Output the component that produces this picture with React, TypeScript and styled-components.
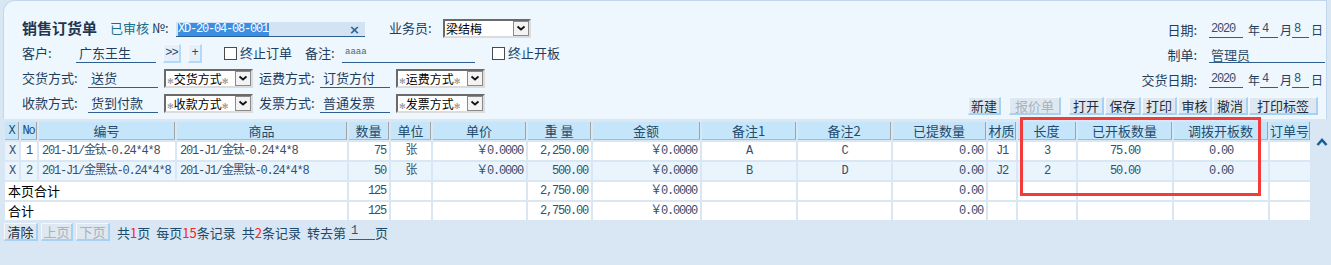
import styled, { createGlobalStyle, css } from "styled-components";

const GlobalStyle = createGlobalStyle`
  html, body {
    margin: 0;
    padding: 0;
    background: #d9e7f5;
  }
  body {
    font-family: "Noto Sans CJK SC", "Liberation Sans", sans-serif;
    font-size: 13px;
    color: #1f3d5c;
  }
`;

// SimSun-like narrow monospace for codes and numbers
const mono = css`
  font-family: "Liberation Mono", "Noto Sans CJK SC", monospace;
  font-size: 12px;
  letter-spacing: -1.2px;
`;

const Page = styled.div`
  position: relative;
  width: 1331px;
  height: 265px;
  overflow: hidden;
`;

const Panel = styled.div`
  display: flex;
  justify-content: space-between;
  box-sizing: border-box;
  width: 1324px;
  height: 119px;
  margin-left: 3px;
  background: #eef6fe;
  border: 1px solid #c3d7ec;
  border-bottom: none;
  border-top-left-radius: 12px;
`;

const LeftForm = styled.div`
  display: flex;
  flex-direction: column;
  gap: 3px;
  padding: 16px 0 0 18px;
`;

const Row = styled.div`
  display: flex;
  align-items: center;
  height: 22px;
  line-height: 20px;
  white-space: nowrap;
`;

const Title = styled.h1`
  flex: none;
  width: 88px;
  margin: 0;
  font-size: 15px;
  font-weight: 700;
  line-height: 20px;
  color: #1f3550;
`;

const Label = styled.span<{ $w?: number; $ml?: number; $color?: string }>`
  flex: none;
  width: ${({ $w }) => ($w ? `${$w}px` : "auto")};
  margin-left: ${({ $ml }) => $ml ?? 0}px;
  color: ${({ $color }) => $color ?? "#1f3d5c"};
`;

const Value = styled.span<{ $w: number; $mono?: boolean }>`
  flex: none;
  box-sizing: border-box;
  width: ${({ $w }) => $w}px;
  height: 20px;
  line-height: 19px;
  padding-left: 3px;
  border-bottom: 1px solid #2f5f90;
  color: #1f3d5c;
  ${({ $mono }) =>
    $mono &&
    css`
      font-family: "Liberation Mono", monospace;
      font-size: 9px;
      color: #4e6478;
    `}
`;

const NoField = styled.div`
  flex: none;
  align-self: flex-end;
  display: flex;
  align-items: center;
  box-sizing: border-box;
  width: 189px;
  height: 15px;
  margin-bottom: 2px;
  background: #d2e4f3;
  border-bottom: 1px solid #2f5f90;
`;

const Selected = styled.span`
  ${mono};
  margin-left: 2px;
  line-height: 13px;
  padding-right: 1px;
  background: #3b8fe3;
  color: #fff;
`;

const Clear = styled.span`
  margin-left: auto;
  margin-right: 5px;
  font: bold 13px "DejaVu Sans", sans-serif;
  line-height: 13px;
  color: #2f5f90;
`;

const SelectBox = styled.div<{ $w: number; $ml?: number }>`
  flex: none;
  display: flex;
  box-sizing: border-box;
  width: ${({ $w }) => $w}px;
  height: 19px;
  margin-left: ${({ $ml }) => $ml ?? 0}px;
  background: #fff;
  border: 2px solid;
  border-color: #6a6a6a #dcdcdc #dcdcdc #6a6a6a;
`;

const SelectText = styled.span`
  flex: 1;
  padding-left: 1px;
  font-size: 12px;
  line-height: 15px;
  white-space: nowrap;
  color: #000;
`;

const Star = styled.span`
  color: #8c8c8c;
  font: 8px "DejaVu Sans", sans-serif;
`;

const SelectArrow = styled.span`
  flex: none;
  display: flex;
  align-items: center;
  justify-content: center;
  box-sizing: border-box;
  width: 16px;
  border: 1px solid #8a8a8a;
  background: #f3f3f3;
`;

const SmallButton = styled.span<{ $w: number; $ml: number }>`
  flex: none;
  box-sizing: border-box;
  width: ${({ $w }) => $w}px;
  height: 19px;
  margin-left: ${({ $ml }) => $ml}px;
  ${mono};
  letter-spacing: -1px;
  line-height: 16px;
  text-align: center;
  color: #2a4a6a;
  background: #e6f0fa;
  border-style: solid;
  border-width: 1px 2px 2px 1px;
  border-color: #f6faff #b3d9f7 #b3d9f7 #f6faff;
`;

const Check = styled.label<{ $w?: number; $ml: number }>`
  flex: none;
  display: flex;
  align-items: center;
  width: ${({ $w }) => ($w ? `${$w}px` : "auto")};
  margin-left: ${({ $ml }) => $ml}px;
  color: #1f3d5c;
`;

const CheckBox = styled.span`
  box-sizing: border-box;
  width: 13px;
  height: 13px;
  margin-right: 3px;
  border: 1px solid #4a4a4a;
  background: #fff;
`;

const RightForm = styled.div`
  display: flex;
  flex-direction: column;
  align-items: flex-end;
  padding: 16px 1px 0 0;
`;

const DateGrid = styled.div`
  display: grid;
  grid-template-columns: auto 116px;
  grid-auto-rows: 25px;
  column-gap: 12px;
  align-items: center;
  white-space: nowrap;
`;

const GridLabel = styled.span`
  justify-self: end;
  color: #1f3d5c;
`;

const DateLine = styled.div`
  display: flex;
  align-items: center;
`;

const Blank = styled.span<{ $w: number; $mono?: boolean }>`
  flex: none;
  box-sizing: border-box;
  width: ${({ $w }) => $w}px;
  height: 16px;
  line-height: 15px;
  padding-left: 2px;
  border-bottom: 1px solid #2f5f90;
  color: #34506e;
  ${({ $mono }) => $mono && mono};
`;

const Unit = styled.span<{ $ml: number }>`
  flex: none;
  margin-left: ${({ $ml }) => $ml}px;
  font-size: 12px;
  line-height: 16px;
  color: #1f3d5c;
`;

const Toolbar = styled.div`
  display: flex;
  gap: 8px;
  margin: 5px 7px 0 0;
`;

const ToolGroup = styled.div`
  display: flex;
  gap: 1px;
`;

const ToolButton = styled.button<{ $w: number }>`
  flex: none;
  box-sizing: border-box;
  width: ${({ $w }) => $w}px;
  height: 18px;
  padding: 0;
  font-family: "Noto Sans CJK SC", sans-serif;
  font-size: 13px;
  line-height: 14px;
  color: #1c2e40;
  background: #dfe8f0;
  border-style: solid;
  border-width: 1px 2px 2px 1px;
  border-color: #f4f8fb #a6d1f3 #a6d1f3 #f4f8fb;
  &:disabled {
    color: #a7b2bd;
  }
`;

const TableArea = styled.div`
  display: flex;
  margin-top: 1px;
`;

const Table = styled.table`
  table-layout: fixed;
  width: 1309px;
  margin-left: 3px;
  border-collapse: separate;
  border-spacing: 2px;
`;

const Col = styled.col<{ $w: number }>`
  width: ${({ $w }) => $w}px;
`;

const Th = styled.th<{ $mono?: boolean }>`
  box-sizing: border-box;
  height: 18px;
  padding: 0;
  overflow: hidden;
  white-space: nowrap;
  font-size: 13px;
  font-weight: 400;
  line-height: 16px;
  text-align: center;
  color: #244a6c;
  background: #c5e6fa;
  border-right: 1px solid #9fa4a8;
  border-bottom: 1px solid #b2b7bc;
  ${({ $mono }) => $mono && mono};
`;

type Align = "left" | "center" | "right";

const Td = styled.td<{ $align: Align; $bg: string }>`
  box-sizing: border-box;
  height: 18px;
  padding: 0 3px;
  overflow: hidden;
  white-space: nowrap;
  ${mono};
  line-height: 18px;
  text-align: ${({ $align }) => $align};
  color: #34506e;
  background: ${({ $bg }) => $bg};
`;

const SumCell = styled.td`
  box-sizing: border-box;
  height: 18px;
  padding: 0 3px;
  font-size: 13px;
  line-height: 18px;
  color: #000;
  background: #fff;
`;

const Gutter = styled.div`
  flex: none;
  display: flex;
  justify-content: center;
  width: 19px;
  padding-top: 18px;
`;

const Pager = styled.div`
  display: flex;
  align-items: center;
  gap: 3px;
  height: 18px;
  margin: 1px 0 0 4px;
  white-space: nowrap;
`;

const PagerText = styled.span<{ $ml: number }>`
  margin-left: ${({ $ml }) => $ml}px;
  font-size: 13px;
  color: #1e4a6a;
`;

const Red = styled.span`
  color: #ff2020;
`;

const Highlight = styled.div`
  position: absolute;
  left: 1020px;
  top: 117px;
  box-sizing: border-box;
  width: 241px;
  height: 79px;
  border: 3px solid #f23b3b;
  pointer-events: none;
`;

const Chevron = () => (
  <svg width="10" height="6" viewBox="0 0 10 6">
    <polyline points="1.5,1.5 5,4.5 8.5,1.5" fill="none" stroke="#111" strokeWidth="1.8" />
  </svg>
);

const UpArrow = () => (
  <svg width="12" height="8" viewBox="0 0 12 8">
    <polyline points="1.5,7 6,2 10.5,7" fill="none" stroke="#1b5f8f" strokeWidth="2.6" />
  </svg>
);

const Select = ({ w, ml, text, starred }: { w: number; ml?: number; text: string; starred?: boolean }) => (
  <SelectBox $w={w} $ml={ml}>
    <SelectText>
      {starred && <Star>✻</Star>}
      {text}
      {starred && <Star>✻</Star>}
    </SelectText>
    <SelectArrow>
      <Chevron />
    </SelectArrow>
  </SelectBox>
);

const DateValue = ({ y, m, d }: { y: string; m: string; d: string }) => (
  <DateLine>
    <Blank $w={34} $mono>
      {y}
    </Blank>
    <Unit $ml={5}>年</Unit>
    <Blank $w={18} $mono>
      {m}
    </Blank>
    <Unit $ml={2}>月</Unit>
    <Blank $w={17} $mono>
      {d}
    </Blank>
    <Unit $ml={2}>日</Unit>
  </DateLine>
);

const columns: { title: string; w: number; align: Align; mono?: boolean }[] = [
  { title: "X", w: 14, align: "center", mono: true },
  { title: "No", w: 16, align: "center", mono: true },
  { title: "编号", w: 136, align: "left" },
  { title: "商品", w: 170, align: "left" },
  { title: "数量", w: 40, align: "right" },
  { title: "单位", w: 40, align: "center" },
  { title: "单价", w: 93, align: "right" },
  { title: "重 量", w: 63, align: "right" },
  { title: "金额", w: 107, align: "right" },
  { title: "备注1", w: 94, align: "center" },
  { title: "备注2", w: 93, align: "center" },
  { title: "已提数量", w: 93, align: "right" },
  { title: "材质", w: 28, align: "center" },
  { title: "长度", w: 58, align: "center" },
  { title: "已开板数量", w: 94, align: "center" },
  { title: "调拨开板数", w: 94, align: "center" },
  { title: "订单号", w: 40, align: "center" },
];

const items = [
  ["X", "1", "201-J1/金钛-0.24*4*8", "201-J1/金钛-0.24*4*8", "75", "张", "￥0.0000", "2,250.00", "￥0.0000", "A", "C", "0.00", "J1", "3", "75.00", "0.00", ""],
  ["X", "2", "201-J1/金黑钛-0.24*4*8", "201-J1/金黑钛-0.24*4*8", "50", "张", "￥0.0000", "500.00", "￥0.0000", "B", "D", "0.00", "J2", "2", "50.00", "0.00", ""],
];

const totals = [
  { label: "本页合计", values: ["125", "", "", "2,750.00", "￥0.0000", "", "", "0.00", "", "", "", "", ""] },
  { label: "合计", values: ["125", "", "", "2,750.00", "￥0.0000", "", "", "0.00", "", "", "", "", ""] },
];

const cellBg = (row: number, col: number) => {
  if (row === 1) return "#eaf4fd";
  if (col === 0) return "#e8f2fb";
  return "#fff";
};

export default function App() {
  return (
    <Page>
      <GlobalStyle />
      <Panel>
        <LeftForm>
          <Row>
            <Title>销售订货单</Title>
            <Label $w={42} $color="#16708e">
              已审核
            </Label>
            <Label $w={24}>№:</Label>
            <NoField>
              <Selected>XD-20-04-08-001</Selected>
              <Clear>×</Clear>
            </NoField>
            <Label $ml={24} $w={54}>
              业务员:
            </Label>
            <Select w={88} text="梁结梅" />
          </Row>
          <Row>
            <Label $w={54}>客户:</Label>
            <Value $w={80}>广东王生</Value>
            <SmallButton $w={18} $ml={7}>
              &gt;&gt;
            </SmallButton>
            <SmallButton $w={14} $ml={7}>
              +
            </SmallButton>
            <Check $w={81} $ml={22}>
              <CheckBox />
              终止订单
            </Check>
            <Label $w={37}>备注:</Label>
            <Value $w={133} $mono>
              aaaa
            </Value>
            <Check $ml={17}>
              <CheckBox />
              终止开板
            </Check>
          </Row>
          <Row>
            <Label $w={66}>交货方式:</Label>
            <Value $w={70}>送货</Value>
            <Select w={89} ml={6} text="交货方式" starred />
            <Label $w={61} $ml={6}>
              运费方式:
            </Label>
            <Value $w={70}>订货方付</Value>
            <Select w={89} ml={6} text="运费方式" starred />
          </Row>
          <Row>
            <Label $w={66}>收款方式:</Label>
            <Value $w={70}>货到付款</Value>
            <Select w={89} ml={6} text="收款方式" starred />
            <Label $w={61} $ml={6}>
              发票方式:
            </Label>
            <Value $w={70}>普通发票</Value>
            <Select w={89} ml={6} text="发票方式" starred />
          </Row>
        </LeftForm>

        <RightForm>
          <DateGrid>
            <GridLabel>日期:</GridLabel>
            <DateValue y="2020" m="4" d="8" />
            <GridLabel>制单:</GridLabel>
            <Blank $w={116}>管理员</Blank>
            <GridLabel>交货日期:</GridLabel>
            <DateValue y="2020" m="4" d="8" />
          </DateGrid>
          <Toolbar>
            <ToolButton $w={33}>新建</ToolButton>
            <ToolButton $w={52} disabled>
              报价单
            </ToolButton>
            <ToolGroup>
              <ToolButton $w={35}>打开</ToolButton>
              <ToolButton $w={36}>保存</ToolButton>
              <ToolButton $w={35}>打印</ToolButton>
              <ToolButton $w={34}>审核</ToolButton>
              <ToolButton $w={35}>撤消</ToolButton>
              <ToolButton $w={69}>打印标签</ToolButton>
            </ToolGroup>
          </Toolbar>
        </RightForm>
      </Panel>

      <TableArea>
        <div>
          <Table>
            <colgroup>
              {columns.map((c) => (
                <Col key={c.title} $w={c.w} />
              ))}
            </colgroup>
            <thead>
              <tr>
                {columns.map((c) => (
                  <Th key={c.title} $mono={c.mono}>
                    {c.title}
                  </Th>
                ))}
              </tr>
            </thead>
            <tbody>
              {items.map((row, r) => (
                <tr key={r}>
                  {row.map((v, c) => (
                    <Td key={c} $align={columns[c].align} $bg={cellBg(r, c)}>
                      {v}
                    </Td>
                  ))}
                </tr>
              ))}
              {totals.map((t) => (
                <tr key={t.label}>
                  <SumCell colSpan={4}>{t.label}</SumCell>
                  {t.values.map((v, i) => (
                    <Td key={i} $align={columns[i + 4].align} $bg="#fff">
                      {v}
                    </Td>
                  ))}
                </tr>
              ))}
            </tbody>
          </Table>
          <Pager>
            <ToolButton $w={34}>清除</ToolButton>
            <ToolButton $w={32} disabled>
              上页
            </ToolButton>
            <ToolButton $w={34} disabled>
              下页
            </ToolButton>
            <PagerText $ml={4}>
              共<Red>1</Red>页
            </PagerText>
            <PagerText $ml={3}>
              每页<Red>15</Red>条记录
            </PagerText>
            <PagerText $ml={3}>
              共<Red>2</Red>条记录
            </PagerText>
            <PagerText $ml={3}>转去第</PagerText>
            <Blank $w={26} $mono>
              1
            </Blank>
            <PagerText $ml={-3}>页</PagerText>
          </Pager>
        </div>
        <Gutter>
          <UpArrow />
        </Gutter>
      </TableArea>

      <Highlight />
    </Page>
  );
}
